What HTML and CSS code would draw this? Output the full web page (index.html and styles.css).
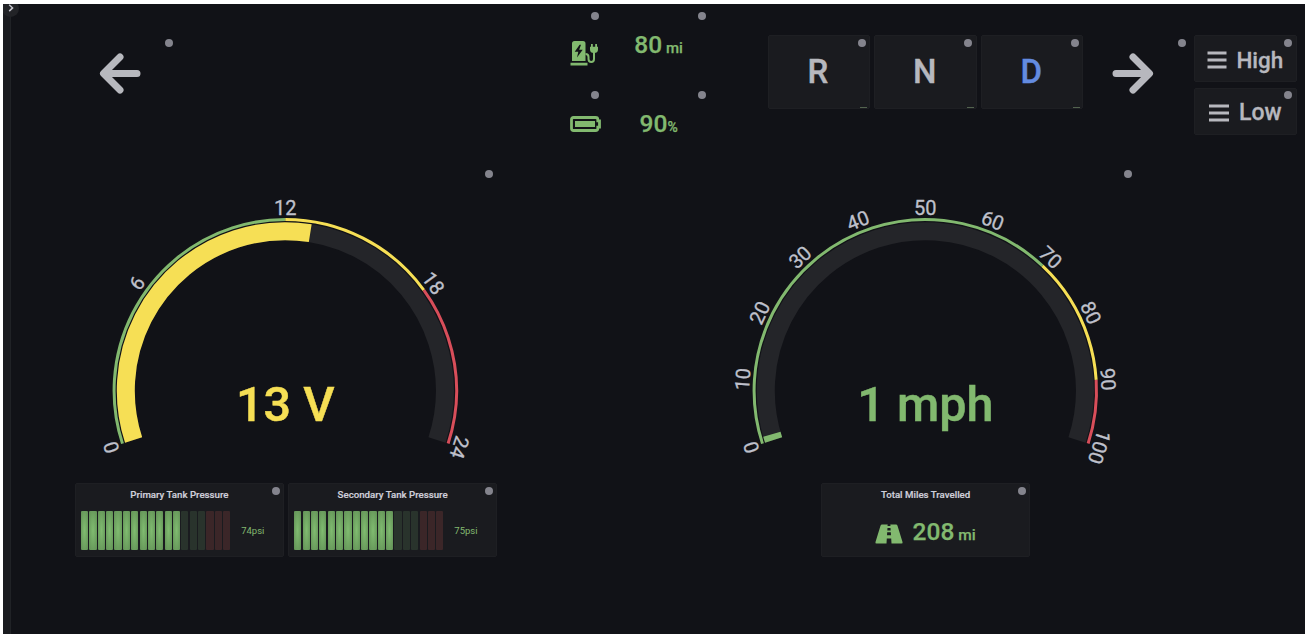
FILE: index.html
```html
<!DOCTYPE html>
<html lang="en">
<head>
  <meta charset="utf-8">
  <title>Vehicle Dashboard</title>
  <meta name="viewport" content="width=device-width, initial-scale=1.0">
  <link rel="stylesheet" href="styles.css">
</head>
<body>
  <div class="screen">
    <div class="sidebar"></div>
    <button class="expand" aria-label="Expand menu">
      <svg width="6" height="8" viewBox="0 0 6 8"><path d="M1.2 .7 4.6 3.9 1.2 7.1"/></svg>
    </button>

    <div class="grid">
      <!-- Turn signals -->
      <div class="panel clear left-signal">
        <span class="dot"></span>
        <svg class="arrow" viewBox="0 0 42 41"><path d="M21 4 4.500 20.500 21 37M5 20.500H38"/></svg>
      </div>
      <div class="panel clear right-signal">
        <span class="dot"></span>
        <svg class="arrow" viewBox="0 0 42 41"><path d="M21 4 37.500 20.500 21 37M37 20.500H4"/></svg>
      </div>

      <!-- Range and battery -->
      <div class="panel clear charge-icon">
        <span class="dot"></span>
        <svg width="29" height="27" viewBox="0 0 29 27">
          <path class="fill" fill-rule="evenodd" d="M2 21V3.500Q2 1 4.500 1H13Q15.500 1 15.500 3.500V21ZM9.600 4.800 4.700 11.800H8.300L7 17.600 12.700 9.800H9.200L11 4.800Z"/>
          <path class="fill" d="M.5 22.700H17.500V25.500H.5ZM20 6.700H28V9.500Q28 13 24 13 20 13 20 9.500ZM21 4H22.800V7H21ZM25.200 4H27V7H25.200Z"/>
          <path class="cable" d="M15.500 14Q18.500 14 18.500 17V19Q18.500 22 21.300 22 24 22 24 19V12"/>
        </svg>
      </div>
      <div class="panel clear stat range">
        <span class="dot"></span>
        <p>80<small> mi</small></p>
      </div>
      <div class="panel clear battery-icon">
        <span class="dot"></span>
        <svg width="32" height="16" viewBox="0 0 32 16">
          <path class="outline" d="M3.500 1.500H25.500Q27.800 1.500 27.800 3.500V4.800H29.500V11.200H27.800V12.500Q27.800 14.500 25.500 14.500H3.500Q1.500 14.500 1.500 12.500V3.500Q1.500 1.500 3.500 1.500Z"/>
          <path class="fill" d="M5 5H25V11H5Z"/>
        </svg>
      </div>
      <div class="panel clear stat battery">
        <span class="dot"></span>
        <p>90<small>%</small></p>
      </div>

      <!-- Gear selector -->
      <div class="panel gear gear-r"><span class="dot"></span>R<i></i></div>
      <div class="panel gear gear-n"><span class="dot"></span>N<i></i></div>
      <div class="panel gear gear-d active"><span class="dot"></span>D<i></i></div>

      <!-- Head lights -->
      <div class="panel beam high">
        <span class="dot"></span>
        <svg width="20" height="18" viewBox="0 0 20 18"><path d="M.5 2H19.500M.5 9H19.500M.5 16H19.500"/></svg>High
      </div>
      <div class="panel beam low">
        <span class="dot"></span>
        <svg width="20" height="18" viewBox="0 0 20 18"><path d="M0 2H20M0 9H20M0 16H20"/></svg>Low
      </div>

      <!-- Gauges: 216 degree sweep, circle lengths are in degrees -->
      <div class="panel clear gauge volts">
        <span class="dot"></span>
        <svg viewBox="-210.300 -224.700 422 312">
          <g transform="rotate(162)">
            <circle class="track" r="159.500" pathLength="360" stroke-dasharray="216 360"/>
            <circle class="level yellow" r="159.500" pathLength="360" stroke-dasharray="117 360"/>
            <circle class="limit green" r="171.200" pathLength="360" stroke-dasharray="108 360"/>
            <circle class="limit yellow" r="171.200" pathLength="360" stroke-dasharray="0 108 54 360"/>
            <circle class="limit red" r="171.200" pathLength="360" stroke-dasharray="0 162 54 360"/>
          </g>
          <g class="ticks">
            <text y="-176" transform="rotate(-108)">0</text>
            <text y="-176" transform="rotate(-54)">6</text>
            <text y="-176">12</text>
            <text y="-176" transform="rotate(54)">18</text>
            <text y="-176" transform="rotate(108)">24</text>
          </g>
          <text class="value yellow" y="30.500">13 V</text>
        </svg>
      </div>
      <div class="panel clear gauge speed">
        <span class="dot"></span>
        <svg viewBox="-210.300 -224.700 422 312">
          <g transform="rotate(162)">
            <circle class="track" r="159.500" pathLength="360" stroke-dasharray="216 360"/>
            <circle class="level green" r="159.500" pathLength="360" stroke-dasharray="2.160 360"/>
            <circle class="limit green" r="171.200" pathLength="360" stroke-dasharray="151.200 360"/>
            <circle class="limit yellow" r="171.200" pathLength="360" stroke-dasharray="0 151.200 43.200 360"/>
            <circle class="limit red" r="171.200" pathLength="360" stroke-dasharray="0 194.400 21.600 360"/>
          </g>
          <g class="ticks">
            <text y="-176" transform="rotate(-108)">0</text>
            <text y="-176" transform="rotate(-86.400)">10</text>
            <text y="-176" transform="rotate(-64.800)">20</text>
            <text y="-176" transform="rotate(-43.200)">30</text>
            <text y="-176" transform="rotate(-21.600)">40</text>
            <text y="-176">50</text>
            <text y="-176" transform="rotate(21.600)">60</text>
            <text y="-176" transform="rotate(43.200)">70</text>
            <text y="-176" transform="rotate(64.800)">80</text>
            <text y="-176" transform="rotate(86.400)">90</text>
            <text y="-176" transform="rotate(108)">100</text>
          </g>
          <text class="value green" y="30.500">1 mph</text>
        </svg>
      </div>

      <!-- Air tanks -->
      <div class="panel titled primary">
        <span class="dot"></span>
        <h2>Primary Tank Pressure</h2>
        <div class="meter">
          <div class="cells">
            <b class="on"></b><b class="on"></b><b class="on"></b><b class="on"></b><b class="on"></b><b class="on"></b>
            <b class="on"></b><b class="on"></b><b class="on"></b><b class="on"></b><b class="on"></b><b class="on"></b>
            <b></b><b></b><b></b><b class="over"></b><b class="over"></b><b class="over"></b>
          </div>
          <span>74psi</span>
        </div>
      </div>
      <div class="panel titled secondary">
        <span class="dot"></span>
        <h2>Secondary Tank Pressure</h2>
        <div class="meter">
          <div class="cells">
            <b class="on"></b><b class="on"></b><b class="on"></b><b class="on"></b><b class="on"></b><b class="on"></b>
            <b class="on"></b><b class="on"></b><b class="on"></b><b class="on"></b><b class="on"></b><b class="on"></b>
            <b></b><b></b><b></b><b class="over"></b><b class="over"></b><b class="over"></b>
          </div>
          <span>75psi</span>
        </div>
      </div>

      <div class="panel titled miles">
        <span class="dot"></span>
        <h2>Total Miles Travelled</h2>
        <div class="total">
          <svg width="28" height="20" viewBox="0 0 28 20">
            <path class="fill" fill-rule="evenodd" d="M7 .5H12.700L12.500 2H15.500L15.300 .5H21Q22 .5 22.500 1.700L27.500 18Q28 19.500 26.500 19.500H16.500L16.200 14.500H11.800L11.500 19.500H1.500Q0 19.500 .5 18L5.500 1.700Q6 .5 7 .5ZM12.500 4 12.300 6.500H15.700L15.500 4ZM12.200 8.300 12 11.300H16L15.800 8.300Z"/>
          </svg>
          <p>208<small> mi</small></p>
        </div>
      </div>
    </div>
  </div>
</body>
</html>
```

FILE: styles.css
```css
body {
  margin: 0;
  padding: 4px 0 0 3px;
  height: 634px;
  box-sizing: border-box;
  overflow: hidden;
  background: #fff;
  font-family: Roboto, sans-serif;
}
.screen {
  position: relative;
  display: flex;
  height: 630px;
  overflow: hidden;
  background: #111217;
}
.sidebar {
  width: 8px;
  box-sizing: border-box;
  background: #1a1b1f;
  border-right: 1px solid #202226;
}
/* round tab that hangs over the sidebar edge */
.expand {
  position: absolute;
  top: -4px;
  left: -1px;
  width: 17px;
  height: 17px;
  padding: 0;
  border: 0;
  border-radius: 50%;
  background: #222327;
}
.expand svg {
  display: block;
  margin: -2px auto 0;
  fill: none;
  stroke: #c4c4cc;
  stroke-width: 1.5;
}

.grid {
  display: grid;
  grid-template-columns: repeat(24, 49.01px);
  grid-auto-rows: 22.06px;
  gap: 4.3px;
  padding: 4.6px 0 0 10.7px;
}
.panel {
  position: relative;
  display: flex;
  align-items: center;
  justify-content: center;
  box-sizing: border-box;
  min-width: 0;
  min-height: 0;
  margin-bottom: 1px;
  border: 1px solid #1e1f23;
  border-radius: 2px;
  background: #1a1b1f;
  color: #b7b8be;
}
.clear {
  border-color: transparent;
  background: none;
}
.dot {
  position: absolute;
  top: 2.8px;
  right: 3.3px;
  width: 8px;
  height: 8px;
  border-radius: 50%;
  background: #84848d;
}

/* Panel placement */
.left-signal { grid-area: 2 / 2 / span 3 / span 2; }
.right-signal { grid-area: 2 / 21 / span 3 / span 2; }
.charge-icon { grid-area: 1 / 11 / span 3 / span 1; }
.range { grid-area: 1 / 12 / span 3 / span 2; }
.battery-icon { grid-area: 4 / 11 / span 3 / span 1; }
.battery { grid-area: 4 / 12 / span 3 / span 2; }
.gear-r { grid-area: 2 / 15 / span 3 / span 2; }
.gear-n { grid-area: 2 / 17 / span 3 / span 2; }
.gear-d { grid-area: 2 / 19 / span 3 / span 2; }
.high { grid-area: 2 / 23 / span 2 / span 2; }
.low { grid-area: 4 / 23 / span 2 / span 2; }
.volts { grid-area: 7 / 2 / span 12 / span 8; }
.speed { grid-area: 7 / 14 / span 12 / span 8; }
.primary { grid-area: 19 / 2 / span 3 / span 4; }
.secondary { grid-area: 19 / 6 / span 3 / span 4; }
.miles { grid-area: 19 / 16 / span 3 / span 4; }

.fill { fill: #82b96f; }
.cable, .outline {
  fill: none;
  stroke: #82b96f;
}
.cable { stroke-width: 2; }
.outline { stroke-width: 2.8; }

.arrow {
  width: 42px;
  height: 41px;
  margin: 4px 11.500px 0 0;
  fill: none;
  stroke: #b7b8be;
  stroke-width: 7;
  stroke-linecap: round;
  stroke-linejoin: round;
}
.charge-icon svg { margin: 16px 0 0 10px; }
.battery-icon svg { margin: 0 0 0 13px; }

p {
  margin: 0;
  font-size: 24.5px;
  font-weight: 500;
  line-height: 28px;
  color: #82b96f;
  white-space: nowrap;
  -webkit-text-stroke: .25px;
}
.stat p { padding: 3px 1px 0 0; }
.stat small { font-size: 15px; }
.battery small { font-size: 14px; }

.gear {
  padding-right: 2px;
  font-size: 33px;
  font-weight: 500;
  -webkit-text-stroke: .4px;
}
.active { color: #638be0; }
.gear i {
  position: absolute;
  right: 2px;
  bottom: 0;
  width: 7px;
  height: 1px;
  background: #53634f;
}
.beam {
  gap: 10px;
  padding-top: 3px;
  font-size: 23px;
  font-weight: 500;
  -webkit-text-stroke: .3px;
}
.high {
  gap: 9px;
  font-size: 22.5px;
}
.beam svg {
  stroke: #b7b8be;
  stroke-width: 2.8;
}

/* Gauges */
.gauge > svg {
  width: 422px;
  height: 312px;
  flex: none;
}
circle { fill: none; }
.track {
  stroke: #242529;
  stroke-width: 18;
}
.level { stroke-width: 18; }
.limit { stroke-width: 3; }
circle.green { stroke: #82b96f; }
circle.yellow { stroke: #f6df55; }
circle.red { stroke: #d84e5a; }
text { text-anchor: middle; }
text.green {
  fill: #82b96f;
  stroke: #82b96f;
}
text.yellow {
  fill: #f6df55;
  stroke: #f6df55;
}
.ticks {
  fill: #bfc0cb;
  stroke: #bfc0cb;
  stroke-width: .3;
  font-size: 20px;
}
.value {
  font-size: 48.500px;
  font-weight: 500;
  stroke-width: .5;
}

/* Titled panels */
.titled {
  flex-direction: column;
  align-items: stretch;
  justify-content: flex-start;
}
h2 {
  margin: 0;
  padding-top: 1px;
  font-size: 9.7px;
  font-weight: 500;
  line-height: 20px;
  text-align: center;
  color: #cfcfda;
  -webkit-text-stroke: .2px;
}
.meter {
  display: flex;
  align-items: center;
  gap: 11px;
  padding: 6px 5px 0;
}
.cells {
  display: flex;
  gap: 1.2px;
  width: 149.200px;
  height: 39px;
}
.cells b {
  flex: 1;
  border-radius: 1px;
  background: #29332c;
}
.cells .on { background: radial-gradient(ellipse at center, #80bc70 0%, #649458 90%); }
.cells .over { background: #3b2628; }
.meter span {
  font-size: 9.5px;
  color: #82b96f;
}
.total {
  display: flex;
  align-items: center;
  justify-content: center;
  gap: 10px;
  padding: 13.500px 1px 0 0;
}
.total small { font-size: 15.5px; }
```
